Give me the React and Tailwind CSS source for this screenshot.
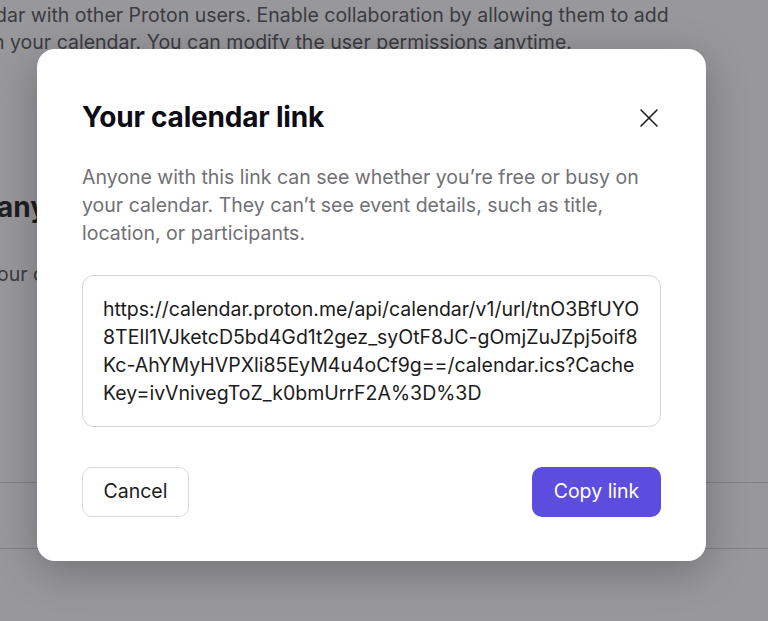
import React from 'react';

const font = { fontFamily: 'Inter, "Noto Sans", sans-serif' };

const linkLines = [
  'https://calendar.proton.me/api/calendar/v1/url/tnO3BfUYO',
  '8TEIl1VJketcD5bd4Gd1t2gez_syOtF8JC-gOmjZuJZpj5oif8',
  'Kc-AhYMyHVPXli85EyM4u4oCf9g==/calendar.ics?Cache',
  'Key=ivVnivegToZ_k0bmUrrF2A%3D%3D',
];

export default function App() {
  return (
    <div className="relative w-[768px] h-[621px] overflow-hidden bg-[#98989c]" style={font}>
      {/* page behind the overlay */}
      <div className="text-[#3b3b40]">
        <p className="text-[19.5px] leading-[27px] pt-[2px] -ml-[5px] whitespace-nowrap">
          dar with other Proton users. Enable collaboration by allowing them to add
        </p>
        <p className="text-[19.5px] leading-[27px] -ml-[7px] whitespace-nowrap">
          n your calendar. You can modify the user permissions anytime.
        </p>
        <h2 className="mt-[134px] -ml-[3px] text-[28px] font-bold leading-[34px] text-[#1e1e22]">any</h2>
        <p className="mt-[36px] -ml-[3px] text-[19.5px] leading-[28px]">our calendar</p>
        <div className="mt-[194px] border-t border-[#808085]" />
        <div className="mt-[65px] border-t border-[#808085]" />
      </div>

      {/* modal */}
      <div className="absolute left-[37px] top-[49px] w-[669px] h-[512px] bg-white rounded-[18px] shadow-[0_10px_40px_rgba(0,0,0,0.25)] px-[45px] pt-[48px]">
        <div className="flex items-start justify-between">
          <h1 className="text-[28px] font-bold leading-[40px] text-[#0c0c14] tracking-[-0.2px]">Your calendar link</h1>
          <button className="mt-[11px] mr-[2px] text-[#1c1c22]">
            <svg width="20" height="20" viewBox="0 0 20 20" fill="none" stroke="currentColor" strokeWidth="1.6" strokeLinecap="round">
              <path d="M2 2 L18 18 M18 2 L2 18" />
            </svg>
          </button>
        </div>
        <p className="mt-[26px] text-[19.5px] leading-[28px] text-[#707075]">
          Anyone with this link can see whether you’re free or busy on your calendar. They can’t see event details, such as title, location, or participants.
        </p>
        <div className="mt-[28px] border border-[#d4d4d8] rounded-[12px] px-[20px] py-[19px] text-[19.5px] leading-[28px] text-[#1b1b20]">
          {linkLines.map((l) => (
            <div key={l} className="whitespace-nowrap">{l}</div>
          ))}
        </div>
        <div className="mt-[40px] flex justify-between">
          <button className="h-[50px] w-[107px] border border-[#dcdce0] rounded-[10px] text-[19.5px] text-[#1b1b20]">
            Cancel
          </button>
          <button className="h-[50px] w-[129px] bg-[#5c4ddf] rounded-[10px] text-[19.5px] text-white">
            Copy link
          </button>
        </div>
      </div>
    </div>
  );
}
